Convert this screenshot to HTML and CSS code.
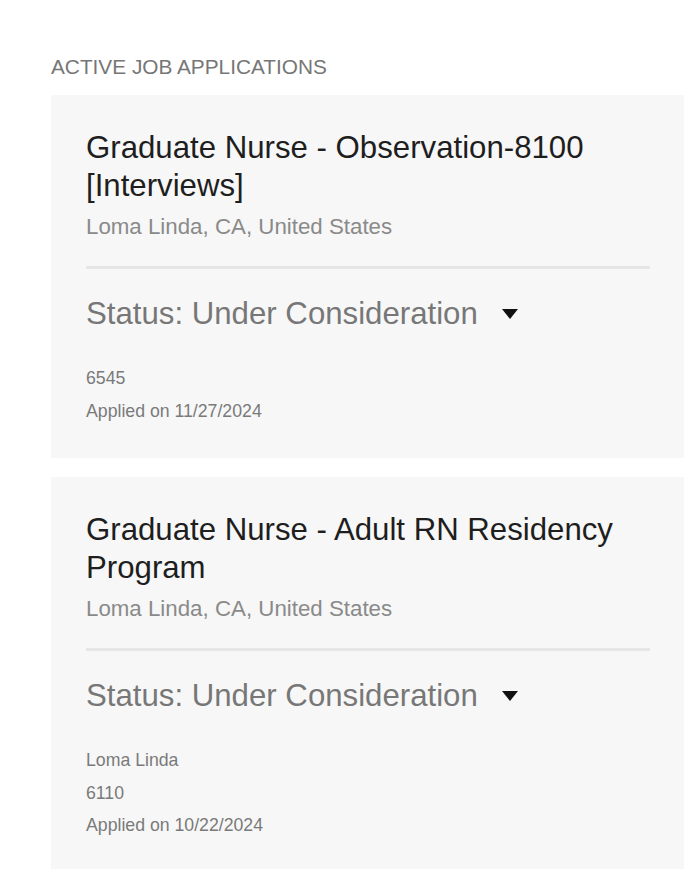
FILE: index.html
```html
<!DOCTYPE html>
<html lang="en">
<head>
<meta charset="utf-8">
<title>Active Job Applications</title>
<link rel="stylesheet" href="styles.css">
</head>
<body>
<main class="page">
  <h2 class="section-title">ACTIVE JOB APPLICATIONS</h2>
  <ul class="app-list">
    <li class="app-card">
      <h3 class="job-title">Graduate Nurse - Observation-8100 [Interviews]</h3>
      <div class="job-location">Loma Linda, CA, United States</div>
      <hr class="divider">
      <div class="status">
        <span class="status-text">Status: Under Consideration</span>
        <svg class="caret" width="16" height="10" viewBox="0 0 16 10"><path d="M0 0 H16 L8 10 Z" fill="#111"/></svg>
      </div>
      <div class="meta">
        <div class="meta-line">6545</div>
        <div class="meta-line">Applied on 11/27/2024</div>
      </div>
    </li>
    <li class="app-card">
      <h3 class="job-title">Graduate Nurse - Adult RN Residency Program</h3>
      <div class="job-location">Loma Linda, CA, United States</div>
      <hr class="divider">
      <div class="status">
        <span class="status-text">Status: Under Consideration</span>
        <svg class="caret" width="16" height="10" viewBox="0 0 16 10"><path d="M0 0 H16 L8 10 Z" fill="#111"/></svg>
      </div>
      <div class="meta">
        <div class="meta-line">Loma Linda</div>
        <div class="meta-line">6110</div>
        <div class="meta-line">Applied on 10/22/2024</div>
      </div>
    </li>
  </ul>
</main>
</body>
</html>
```

FILE: styles.css
```css
html, body {
  margin: 0;
  padding: 0;
  background: #ffffff;
}
body {
  font-family: "Liberation Sans", Arial, Helvetica, sans-serif;
  color: #222;
}
.page {
  padding: 56px 16px 0 51px;
}
.section-title {
  margin: 0;
  font-size: 20.8px;
  line-height: 22px;
  font-weight: normal;
  color: #767676;
}
.app-list {
  list-style: none;
  margin: 17px 0 0 0;
  padding: 0;
  display: flex;
  flex-direction: column;
  gap: 19px;
}
.app-card {
  background: #f7f7f7;
  padding: 34px 34px 31px 35px;
}
.job-title {
  margin: 0;
  font-size: 31.2px;
  line-height: 38px;
  font-weight: normal;
  color: #1e1e1e;
}
.job-location {
  margin-top: 8px;
  font-size: 22.3px;
  line-height: 28px;
  color: #8a8a8a;
}
.divider {
  margin: 25px 0 0 0;
  border: 0;
  height: 3px;
  background: #e6e6e6;
}
.status {
  margin-top: 27px;
  display: flex;
  align-items: center;
  gap: 24px;
  height: 36px;
}
.status-text {
  font-size: 31.2px;
  line-height: 36px;
  color: #777777;
}
.caret {
  display: block;
}
.meta {
  margin-top: 30px;
}
.meta-line {
  font-size: 17.7px;
  line-height: 32.5px;
  color: #7a7a7a;
}
```
